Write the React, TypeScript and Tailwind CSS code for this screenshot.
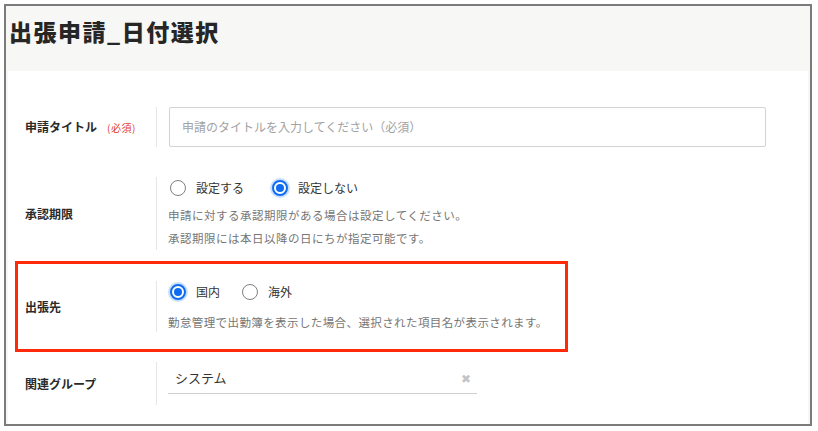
const jp = "font-['Noto_Sans_CJK_JP','Noto_Sans',sans-serif]";

function Radio({ checked }: { checked?: boolean }) {
  if (checked) {
    return (
      <span className="ml-[1px] w-[16px] h-[16px] rounded-full border-2 border-[#0f6cf2] bg-white flex items-center justify-center shadow-[0_0_0_2px_rgba(15,108,242,0.22)]">
        <span className="w-[8px] h-[8px] rounded-full bg-[#0f6cf2]" />
      </span>
    );
  }
  return <span className="ml-[1px] w-[16px] h-[16px] rounded-full border border-[#7f7f7f] bg-white" />;
}

function Option({ label, checked, gap }: { label: string; checked?: boolean; gap: string }) {
  return (
    <label className={`flex items-center ${gap}`}>
      <Radio checked={checked} />
      <span className="ml-[10px] text-[12px] text-[#333] leading-[22px]">{label}</span>
    </label>
  );
}

function Label({ children, w = 'w-[148px] pl-[17px]' }: { children: React.ReactNode; w?: string }) {
  return (
    <div className={`${w} shrink-0 flex items-center text-[12px] font-bold text-[#2a2a2a]`}>{children}</div>
  );
}

export default function App() {
  return (
    <div className={`w-[818px] h-[431px] bg-white pt-[4px] pl-[4px] ${jp}`}>
      <div className="w-[808px] h-[422px] border-2 border-[#7b7b7b] flex flex-col bg-[#f7f7f5]">
        <div className="h-[65px] shrink-0 pl-[3px] pt-[9px]">
          <h1 className="text-[23px] leading-[32px] font-black tracking-[1.5px] text-[#262626]">出張申請_日付選択</h1>
        </div>

        <div className="flex-1 mx-[2px] bg-white pt-[36px]">
          {/* 申請タイトル */}
          <div className="flex items-center">
            <Label>
              申請タイトル
              <span className="ml-[10px] text-[10px] font-normal tracking-[0.5px] text-[#e2412c]">(必須)</span>
            </Label>
            <div className="border-l border-[#e6e6e6] pl-3">
              <div className="w-[597px] h-[40px] border border-[#d3d3d3] rounded-[2px] flex items-center pl-3 text-[12px] text-[#a3a3a3]">
                申請のタイトルを入力してください（必須）
              </div>
            </div>
          </div>

          {/* 承認期限 */}
          <div className="flex items-center mt-[30px]">
            <Label>承認期限</Label>
            <div className="border-l border-[#e6e6e6] pl-3 h-[73px]">
              <div className="flex items-center h-[22px]">
                <Option label="設定する" gap="mr-[27px]" />
                <Option label="設定しない" checked gap="" />
              </div>
              <div className="mt-[5px] text-[11.5px] leading-[23px] tracking-[0.5px] text-[#767676] -ml-[1px]">
                <p>申請に対する承認期限がある場合は設定してください。</p>
                <p>承認期限には本日以降の日にちが指定可能です。</p>
              </div>
            </div>
          </div>

          {/* 出張先 (highlighted) */}
          <div className="mt-[11px] ml-[7px] w-[553px] border-[3px] border-[#ff2a0a] py-[17px] flex items-center">
            <Label w="w-[138px] pl-[7px]">出張先</Label>
            <div className="border-l border-[#e6e6e6] pl-3 h-[51px]">
              <div className="flex items-center h-[22px]">
                <Option label="国内" checked gap="mr-[21px]" />
                <Option label="海外" gap="" />
              </div>
              <p className="mt-[9px] text-[11.5px] leading-[20px] tracking-[0.4px] text-[#767676] -ml-[1px]">
                勤怠管理で出勤簿を表示した場合、選択された項目名が表示されます。
              </p>
            </div>
          </div>

          {/* 関連グループ */}
          <div className="flex items-center mt-[10px]">
            <Label>関連グループ</Label>
            <div className="border-l border-[#e6e6e6] pl-[11px] pb-[11px]">
              <div className="w-[309px] h-[32px] border-b border-[#cfcfcf] flex items-center justify-between pl-[7px] pr-[6px]">
                <span className="text-[13px] text-[#333]">システム</span>
                <span className="text-[12px] text-[#c4c4c4] leading-none">✖</span>
              </div>
            </div>
          </div>
        </div>
      </div>
    </div>
  );
}
